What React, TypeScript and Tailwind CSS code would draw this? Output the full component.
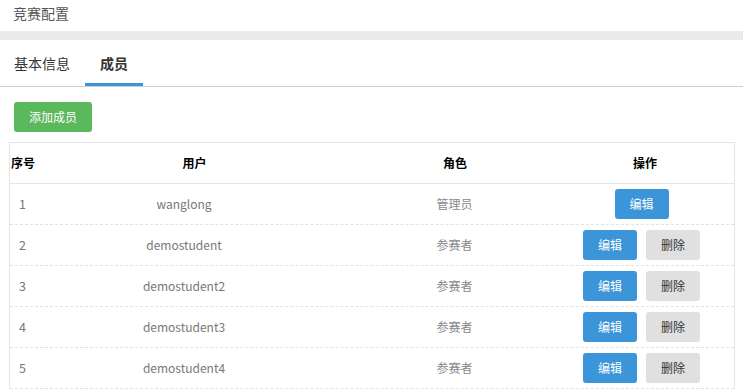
import React from "react";

const rows = [
  { id: 1, user: "wanglong", role: "管理员", admin: true },
  { id: 2, user: "demostudent", role: "参赛者", admin: false },
  { id: 3, user: "demostudent2", role: "参赛者", admin: false },
  { id: 4, user: "demostudent3", role: "参赛者", admin: false },
  { id: 5, user: "demostudent4", role: "参赛者", admin: false },
];

export default function App() {
  return (
    <div
      className="w-[743px] h-[389px] overflow-hidden bg-white"
      style={{ fontFamily: '"Noto Sans CJK SC", "Noto Sans", sans-serif' }}
    >
      <div className="h-[31px] pl-[13px] pt-[3px] text-[14px] leading-[20px] text-[#555]">竞赛配置</div>
      <div className="h-[9px] bg-[#e9eaec]" />
      <div className="flex h-[47px] border-b border-[#d0d0d0]">
        <div className="w-[85px] pl-[14px] pt-[13px] text-[14px] leading-[20px] text-[#333]">基本信息</div>
        <div className="relative w-[58px] pt-[13px] text-center text-[14px] leading-[20px] font-bold text-[#333]">
          成员
          <div className="absolute bottom-0 left-0 right-0 h-[3px] bg-[#3a94d6]" />
        </div>
      </div>
      <div className="pl-[14px] pt-[15px]">
        <button className="h-[30px] w-[78px] rounded-[3px] bg-[#5cb85c] text-[12px] text-white">添加成员</button>
      </div>
      <div className="ml-[9px] mt-[10px] w-[726px] border-l border-r border-t border-[#e4e4e4]">
        <div className="grid h-[41px] grid-cols-[40px_289px_232px_148px_1fr] items-center border-b border-[#e4e4e4] text-[12px] font-bold text-black">
          <div className="pl-[1px]">序号</div>
          <div className="text-center">用户</div>
          <div className="text-center">角色</div>
          <div className="text-center">操作</div>
          <div />
        </div>
        {rows.map((r) => (
          <div
            key={r.id}
            className="grid h-[41px] grid-cols-[31px_286px_255px_119px_1fr] items-center border-b border-dashed border-[#e2e2e2]"
          >
            <div className="pl-[9px] text-[12.5px] text-[#777]">{r.id}</div>
            <div className="text-center text-[12px] text-[#777]">{r.user}</div>
            <div className="text-center text-[12px] text-[#888]">{r.role}</div>
            <div className="flex justify-center gap-[9px]">
              <button className="h-[30px] w-[54px] rounded-[3px] bg-[#3c95d8] text-[12px] text-white">编辑</button>
              {!r.admin && (
                <button className="h-[30px] w-[54px] rounded-[3px] bg-[#e0e0e0] text-[12px] text-[#333]">删除</button>
              )}
            </div>
            <div />
          </div>
        ))}
      </div>
    </div>
  );
}
